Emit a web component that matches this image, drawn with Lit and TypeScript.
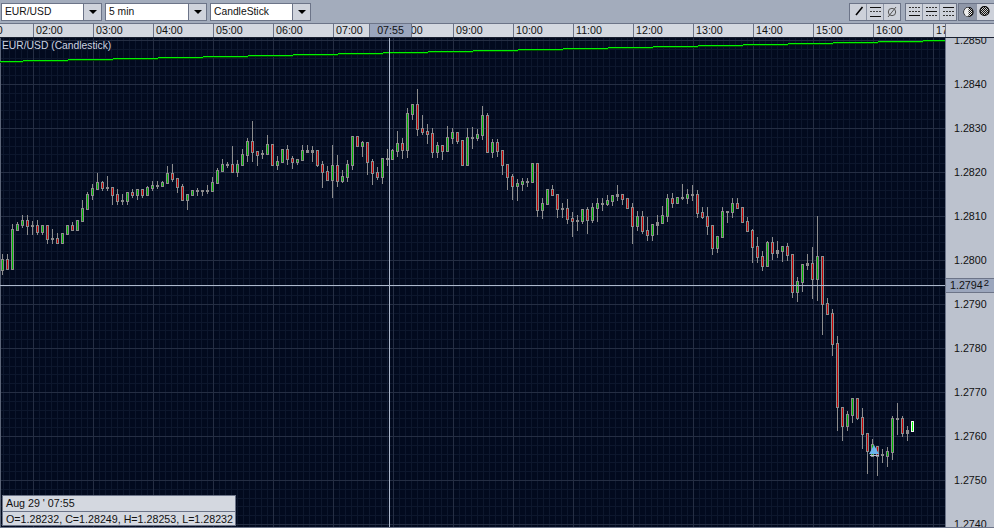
import { LitElement, html, css, svg } from "lit";
import { customElement } from "lit/decorators.js";

type Row = [number, number, number, number, string];
interface Chunk { start: number; y0: number; rows: Row[] }

const chunks: Chunk[] = [
  { start: 0, y0: 90, rows: [
    [492,508,540,552,"g"],[492,508,536,536,"r"],[403,418,536,536,"g"],[396,403,419,419,"g"],[376,390,404,411,"g"],
    [376,390,407,431,"r"],[392,405,407,431,"n"],[391,406,425,431,"r"],[405,406,425,431,"g"],[405,406,446,458,"r"],
    [418,444,446,458,"n"],[430,445,458,458,"r"],[430,430,458,458,"g"],[406,406,431,431,"g"],[396,405,419,419,"r"],
    [391,391,419,419,"g"],[331,355,392,392,"g"],[306,312,356,356,"g"],[282,295,315,327,"g"],[250,276,296,296,"g"],
    [274,276,294,300,"r"],[259,291,294,300,"n"],[292,292,315,342,"r"],[298,312,332,342,"r"],[312,331,333,342,"n"],
    [306,307,332,342,"g"],[297,307,315,321,"r"],[297,297,315,327,"g"],[297,297,315,321,"r"],[287,291,315,315,"g"],
    [273,285,294,300,"g"],[273,286,288,294,"n"],[273,276,288,288,"g"],[228,249,279,279,"g"],[222,249,267,273,"r"],
    [264,264,291,306,"r"],[282,289,330,330,"r"],[312,313,330,357,"g"],[300,300,315,315,"g"],[294,300,302,315,"n"],
    [300,300,302,315,"n"],[285,300,302,309,"n"],[261,277,303,303,"g"],[234,240,279,279,"g"],[207,222,243,243,"g"],
    [216,222,225,231,"n"],[168,222,247,247,"r"],[210,222,246,258,"g"],
  ]},
  { start: 48, y0: 80, rows: [
    [207,222,255,255,"g"],[174,183,225,243,"g"],[123,183,216,243,"r"],[213,213,225,255,"r"],[210,220,223,234,"n"],
    [165,192,222,222,"g"],[192,192,255,255,"r"],[228,243,255,267,"g"],[207,207,246,246,"g"],[195,207,237,252,"r"],
    [228,234,246,264,"r"],[237,237,246,252,"g"],[195,210,240,240,"g"],[195,210,216,216,"n"],[198,210,216,243,"n"],
    [210,210,255,258,"r"],[243,252,276,321,"r"],[258,273,300,300,"r"],[195,255,300,351,"g"],[225,255,303,318,"r"],
    [270,288,303,306,"g"],[240,252,291,303,"g"],[168,168,255,267,"g"],[168,168,198,198,"r"],[183,186,198,228,"g"],
    [186,186,246,282,"r"],[237,243,279,312,"r"],[261,276,291,297,"r"],[234,234,291,309,"g"],[207,234,237,255,"n"],
    [207,210,237,237,"g"],[153,189,213,228,"g"],[174,189,210,234,"r"],[84,99,210,231,"g"],[72,72,102,117,"g"],
    [27,72,147,165,"r"],[105,144,156,162,"r"],[132,153,162,189,"r"],[144,159,216,231,"r"],[186,195,216,231,"g"],
    [195,195,213,237,"r"],[138,171,213,213,"g"],[144,156,174,189,"g"],[156,156,183,189,"r"],[180,180,255,255,"r"],
    [144,171,255,255,"g"],[141,171,174,204,"n"],[147,162,174,180,"g"],
  ]},
  { start: 96, y0: 90, rows: [
    [48,75,135,147,"g"],[69,75,186,186,"r"],[147,156,186,201,"g"],[147,156,183,198,"r"],[180,180,225,252,"r"],
    [222,222,261,297,"r"],[252,258,288,327,"r"],[267,279,288,330,"g"],[264,273,282,300,"g"],[264,272,275,288,"n"],
    [219,219,276,276,"g"],[219,219,360,378,"r"],[324,339,360,384,"g"],[297,297,342,342,"g"],[285,297,315,315,"r"],
    [312,312,357,381,"r"],[339,354,357,381,"n"],[327,354,387,399,"r"],[366,384,393,438,"r"],[375,390,393,420,"n"],
    [357,357,393,399,"g"],[351,357,390,429,"r"],[339,351,390,396,"g"],[324,339,354,393,"g"],[324,339,342,360,"n"],
    [315,330,342,345,"g"],[315,315,333,345,"g"],[285,312,318,330,"n"],[312,312,327,342,"r"],[324,324,354,354,"r"],
    [339,351,408,459,"r"],[363,378,408,420,"g"],[363,378,423,429,"r"],[381,420,435,450,"r"],[402,402,435,450,"g"],
    [375,396,405,432,"n"],[348,375,399,399,"g"],[312,324,378,393,"g"],[309,324,339,351,"r"],[321,321,339,339,"g"],
    [282,321,324,327,"n"],[297,312,324,339,"g"],[285,312,315,330,"n"],[300,312,369,381,"r"],
  ]},
  { start: 140, y0: 190, rows: [
    [51,66,81,84,"r"],[51,78,108,132,"r"],[105,105,174,192,"r"],[138,138,174,186,"g"],[51,63,141,141,"g"],
    [63,63,66,96,"n"],[25,39,66,81,"g"],[24,39,54,54,"r"],[51,51,96,96,"r"],[81,93,123,123,"r"],
    [117,120,171,216,"r"],[141,168,201,216,"r"],[183,198,228,240,"r"],[153,156,228,228,"g"],[141,156,189,207,"r"],
    [153,180,189,201,"n"],[168,168,183,213,"g"],[159,168,195,210,"r"],[192,192,306,321,"r"],[261,273,306,333,"g"],
    [222,222,276,303,"g"],[192,219,225,237,"n"],[171,219,267,324,"r"],[78,198,267,330,"g"],[198,198,342,432,"r"],
    [324,339,372,372,"r"],[357,369,462,495,"r"],[438,459,651,720,"r"],
  ]},
  { start: 168, y0: 360, rows: [
    [142,142,198,240,"r"],[153,162,198,210,"g"],[114,114,165,186,"g"],[114,114,174,177,"r"],[144,171,222,264,"r"],
    [219,219,273,339,"r"],[237,252,288,288,"g"],[258,258,288,345,"r"],[267,282,285,306,"n"],[261,273,288,318,"g"],
    [168,174,276,297,"g"],[129,174,177,222,"n"],[168,174,219,228,"r"],[198,210,219,240,"n"],
  ]},
];

interface Candle { x: number; hi: number; top: number; bot: number; lo: number; kind: string }
const candles: Candle[] = chunks.flatMap((ch) =>
  ch.rows.map((r, i) => {
    const y = (v: number) => Math.round(ch.y0 + v / 3);
    return { x: 2 + 5 * (ch.start + i), hi: y(r[0]), top: y(r[1]), bot: y(r[2]), lo: y(r[3]), kind: r[4] };
  })
).filter((c, i, all) => all.findIndex((o) => o.x === c.x) === i);

const colorOf: Record<string, string> = { g: "#00b800", r: "#c80000", n: "#8c8c8c" };
const hours = ["01","02","03","04","05","06","07","08","09","10","11","12","13","14","15","16","17"];
const prices = ["1.2850","1.2840","1.2830","1.2820","1.2810","1.2800","1.2790","1.2780","1.2770","1.2760","1.2750","1.2740"];

const range = (n: number) => Array.from({ length: n }, (_, i) => i);

const grid = svg`
  ${range(158).map((i) => svg`<rect x=${3 + i * 6} y="38" width="1" height="490" fill="#0d172d"></rect>`)}
  ${range(56).map((i) => svg`<rect x="0" y=${Math.round(40 + i * 8.8)} width="945" height="1" fill="#0d172d"></rect>`)}
  ${range(16).map((i) => svg`<rect x=${33 + i * 60} y="38" width="1" height="490" fill="#252e43"></rect>`)}
  ${range(12).map((i) => svg`<rect x="0" y=${40 + i * 44} width="945" height="1" fill="#252e43"></rect>`)}
  <rect x="0" y="38" width="1" height="490" fill="#5c6578"></rect>
`;

const greenLine = svg`
  <rect x="0" y="61" width="23" height="1" fill="#00f000"></rect>
  <rect x="0" y="62" width="23" height="1" fill="#004c00"></rect>
  ${range(21).map((k) => {
    const x = 23 + 45 * k;
    const w = Math.min(45, 945 - x);
    return svg`<rect x=${x} y=${60 - k} width=${w} height="1" fill="#00f000"></rect>
      <rect x=${x} y=${61 - k} width=${w} height="1" fill="#004c00"></rect>`;
  })}
`;

const candleMarks = candles.map((c) => {
  const h = c.bot - c.top;
  return svg`
    <rect x=${c.x} y=${c.hi} width="1" height=${c.lo - c.hi + 1} fill="#8c8c8c"></rect>
    <rect x=${c.x - 1} y=${c.top} width="3" height=${h + 1} fill="#8c8c8c"></rect>
    ${h >= 2 && c.kind !== "n"
      ? svg`<rect x=${c.x} y=${c.top + 1} width="1" height=${h - 1} fill=${colorOf[c.kind]}></rect>`
      : ""}
  `;
});

const icons = {
  line: svg`<path d="M6 15L12.5 7" stroke="#000" stroke-width="1.6" fill="none"></path>`,
  channel: svg`
    <rect x="3" y="7" width="11" height="1" fill="#111"></rect>
    <path d="M3 11.5H14" stroke="#444" stroke-dasharray="2 1" fill="none"></path>
    <rect x="3" y="16" width="11" height="1" fill="#111"></rect>`,
  none: svg`<circle cx="8" cy="12" r="3.7" fill="none" stroke="#555"></circle>
    <path d="M4 17L12 7" stroke="#555" fill="none"></path>`,
  sBottom: svg`
    <path d="M3 7.5H14M3 11.5H14" stroke="#333" stroke-dasharray="2 1" fill="none"></path>
    <rect x="3" y="15" width="11" height="1" fill="#111"></rect>`,
  sMid: svg`
    <path d="M3 7.5H14M3 15.5H14" stroke="#333" stroke-dasharray="2 1" fill="none"></path>
    <rect x="3" y="11" width="11" height="1" fill="#111"></rect>`,
  sTop: svg`
    <path d="M3 11.5H14M3 15.5H14" stroke="#333" stroke-dasharray="2 1" fill="none"></path>
    <rect x="3" y="7" width="11" height="1" fill="#111"></rect>`,
  half: svg`
    <defs><pattern id="dith" width="2" height="2" patternUnits="userSpaceOnUse">
      <rect width="2" height="2" fill="#eee"></rect><rect width="1" height="1" fill="#111"></rect><rect x="1" y="1" width="1" height="1" fill="#111"></rect>
    </pattern></defs>
    <circle cx="9.5" cy="12" r="4.5" fill="url(#dith)" stroke="#000" stroke-width="1.2"></circle>
    <path d="M9.5 7.5A4.5 4.5 0 0 0 9.5 16.5Z" fill="#eee"></path>`,
  full: svg`
    <defs><pattern id="dith2" width="2" height="2" patternUnits="userSpaceOnUse">
      <rect width="2" height="2" fill="#ccc"></rect><rect width="1" height="1" fill="#111"></rect><rect x="1" y="1" width="1" height="1" fill="#111"></rect>
    </pattern></defs>
    <circle cx="7.5" cy="11" r="4.5" fill="url(#dith2)" stroke="#000" stroke-width="1.2"></circle>`,
};

@customElement("app-root")
export class AppRoot extends LitElement {
  static styles = css`
    :host {
      display: grid;
      grid-template-rows: 23px 15px 490px;
      width: 994px;
      height: 528px;
      overflow: hidden;
      background: #a3acbc;
      font: 10.7px "Liberation Sans", Arial, sans-serif;
      color: #111;
      position: relative;
    }
    .toolbar {
      display: flex;
      align-items: flex-start;
      padding: 3px 0 0 1px;
    }
    .combo {
      display: flex;
      height: 18px;
      margin-right: 3px;
      box-sizing: border-box;
    }
    .field {
      box-sizing: border-box;
      background: #fff;
      border: 1px solid #6c7488;
      font-size: 10.3px;
      line-height: 16px;
      padding-left: 3px;
    }
    .arrow {
      box-sizing: border-box;
      width: 18px;
      background: #cfd3dc;
      border: 1px solid #6c7488;
      border-left: none;
      display: flex;
      align-items: center;
      justify-content: center;
    }
    .arrow i {
      display: block;
      width: 0;
      height: 0;
      border-left: 4px solid transparent;
      border-right: 4px solid transparent;
      border-top: 4px solid #000;
    }
    .w1 { width: 83px; }
    .w2 { width: 84px; }
    .w3 { width: 83px; }
    .spacer { flex: 1; }
    .group {
      display: flex;
      box-sizing: border-box;
      height: 18px;
      border: 1px solid #6c7488;
      margin-right: 4px;
      background: #cdd1da;
    }
    .group.mid { margin-right: 1px; }
    .group.last { margin-right: 0; border-right: none; }
    .btn {
      box-sizing: border-box;
      width: 17px;
      height: 16px;
      border-left: 1px solid #8d95a6;
    }
    .btn:first-child { border-left: none; width: 16px; }
    .last .btn { width: 18px; }
    .last .btn:first-child { width: 17px; }
    .btn svg { display: block; margin-top: -4px; overflow: visible; }
    .btn.on { background: #8f97a8; }
    .timeaxis {
      display: flex;
      position: relative;
      overflow: hidden;
      background: #d4d8e0;
      border-top: 1px solid #6c7488;
      border-bottom: 1px solid #1a2030;
      box-sizing: border-box;
      line-height: 13px;
    }
    .ticks {
      display: flex;
      width: 945px;
      overflow: hidden;
      flex: none;
    }
    .tick {
      flex: none;
      box-sizing: border-box;
      width: 60px;
      padding-left: 2px;
      border-left: 1px solid #6c7488;
    }
    .tick:first-child { margin-left: -27px; }
    .corner {
      flex: 1;
      border-left: 1px solid #6c7488;
    }
    .cursor-time {
      position: absolute;
      left: 369px;
      top: 0;
      width: 43px;
      height: 13px;
      box-sizing: border-box;
      background: #9ba6bd;
      border-left: 1px solid #6c7488;
      border-right: 1px solid #6c7488;
      text-align: center;
    }
    .body { display: flex; height: 490px; position: relative; }
    .chart {
      position: relative;
      width: 945px;
      height: 490px;
      flex: none;
      background: #020a1e;
      overflow: hidden;
    }
    .chart svg { display: block; }
    .title {
      position: absolute;
      left: 2px;
      top: 1px;
      color: #ccd3e0;
      line-height: 13px;
      font-size: 10.3px;
    }
    .info {
      position: absolute;
      left: 2px;
      top: 457px;
      width: 234px;
      height: 31px;
      box-sizing: border-box;
      background: #d4d8e0;
      border: 1px solid #6c7488;
      line-height: 14px;
      display: grid;
      grid-template-rows: 15px 1fr;
    }
    .info div { padding-left: 3px; white-space: nowrap; }
    .info div + div { border-top: 1px solid #6c7488; }
    .prices {
      flex: 1;
      box-sizing: border-box;
      background: #bcc2ce;
      border-left: 1px solid #6c7488;
      position: relative;
      overflow: hidden;
      display: flex;
      flex-direction: column;
      padding-left: 8px;
    }
    .price {
      flex: none;
      height: 44px;
      line-height: 44px;
    }
    .price:first-child { margin-top: -20px; }
    .tag {
      position: absolute;
      left: 0;
      right: 0;
      top: 240px;
      height: 15px;
      box-sizing: border-box;
      background: #9ba6bd;
      border-top: 1px solid #6c7488;
      border-bottom: 1px solid #6c7488;
      padding-left: 4px;
      line-height: 13px;
    }
    .tag sup { font-size: 9.5px; line-height: 0; vertical-align: 3px; margin-left: 1px; }
    .edge {
      position: absolute;
      left: 0;
      right: 0;
      bottom: 0;
      height: 1px;
      background: #6c7488;
    }
  `;

  render() {
    const btn = (icon: unknown, on = false) => html`
      <div class="btn ${on ? "on" : ""}"><svg width="17" height="18" viewBox="0 0 17 18">${icon}</svg></div>`;
    return html`
      <div class="toolbar">
        <div class="combo"><div class="field w1">EUR/USD</div><div class="arrow"><i></i></div></div>
        <div class="combo"><div class="field w2">5 min</div><div class="arrow"><i></i></div></div>
        <div class="combo"><div class="field w3">CandleStick</div><div class="arrow"><i></i></div></div>
        <div class="spacer"></div>
        <div class="group">${btn(icons.line)}${btn(icons.channel)}${btn(icons.none)}</div>
        <div class="group mid">${btn(icons.sBottom)}${btn(icons.sMid)}${btn(icons.sTop)}</div>
        <div class="group last">${btn(icons.half, true)}${btn(icons.full)}</div>
      </div>
      <div class="timeaxis">
        <div class="ticks">${hours.map((h) => html`<div class="tick">${h}:00</div>`)}</div>
        <div class="corner"></div>
        <div class="cursor-time">07:55</div>
      </div>
      <div class="body">
        <div class="chart">
          <svg width="945" height="490" viewBox="0 38 945 490" shape-rendering="crispEdges">
            ${grid}
            ${greenLine}
            ${candleMarks}
            <rect x="911" y="421" width="3" height="11" fill="#f4f4f4"></rect>
            <rect x="912" y="422" width="1" height="9" fill="#00ff00"></rect>
            <rect x="389" y="38" width="1" height="490" fill="#adb8cc"></rect>
            <rect x="0" y="285" width="945" height="1" fill="#adb8cc"></rect>
            <polygon points="874,445 869,454 879,454" fill="#6db6ec" shape-rendering="auto"></polygon>
            <rect x="870" y="455" width="9" height="1" fill="#b9c4d6"></rect>
          </svg>
          <div class="title">EUR/USD (Candlestick)</div>
          <div class="info">
            <div>Aug 29 ' 07:55</div>
            <div>O=1.28232, C=1.28249, H=1.28253, L=1.28232</div>
          </div>
        </div>
        <div class="prices">
          ${prices.map((p) => html`<div class="price">${p}</div>`)}
          <div class="tag">1.2794<sup>2</sup></div>
        </div>
        <div class="edge"></div>
      </div>
    `;
  }
}
